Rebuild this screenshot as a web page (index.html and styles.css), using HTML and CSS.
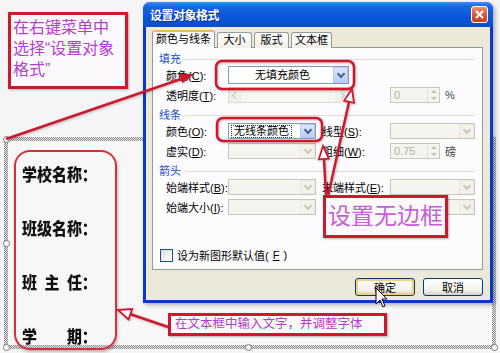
FILE: index.html
```html
<!DOCTYPE html>
<html lang="zh-CN">
<head>
    <meta charset="UTF-8">
    <meta name="viewport" content="width=device-width, initial-scale=1.0">
    <title>设置对象格式</title>
    <link rel="stylesheet" href="styles.css">
</head>
<body>
    <!-- 文档中的文本框 -->
    <div class="frame">
        <div class="fields">
            <div class="field"><span>学</span><span>校</span><span>名</span><span>称</span><span>：</span></div>
            <div class="field"><span>班</span><span>级</span><span>名</span><span>称</span><span>：</span></div>
            <div class="field"><span>班</span><span>主</span><span>任：</span></div>
            <div class="field"><span>学</span><span>期：</span></div>
        </div>
        <span class="handle h-tl"></span>
        <span class="handle h-ml"></span>
        <span class="handle h-bl"></span>
        <span class="handle h-bm"></span>
        <span class="handle h-br"></span>
    </div>

    <!-- 设置对象格式 对话框 -->
    <div class="dialog">
        <div class="titlebar">
            <span class="title">设置对象格式</span>
            <span class="close">
                <svg width="9" height="9" viewBox="0 0 9 9"><path d="M1 1l7 7M8 1l-7 7" stroke="#fff" stroke-width="2"/></svg>
            </span>
        </div>
        <div class="dlg-body">
            <div class="tabs">
                <span class="tab active">颜色与线条</span>
                <span class="tab">大小</span>
                <span class="tab">版式</span>
                <span class="tab">文本框</span>
            </div>
            <div class="panel">
                <div class="group">填充</div>
                <div class="rows">
                    <span class="lbl">颜色(<u>C</u>):</span>
                    <span class="combo wide"><span class="val">无填充颜色</span><span class="arrow"></span></span>
                    <span class="lbl">透明度(<u>T</u>):</span>
                    <span class="slider"><span class="sb-btn left"></span><span class="sb-btn right"></span></span>
                    <span class="spin-wrap"><span class="spin"><span class="val">0</span><span class="updown"></span></span>%</span>
                </div>

                <div class="group">线条</div>
                <div class="rows">
                    <span class="lbl">颜色(<u>O</u>):</span>
                    <span class="combo"><span class="val"><span class="focus">无线条颜色</span></span><span class="arrow"></span></span>
                    <span class="lbl">线型(<u>S</u>):</span>
                    <span class="combo off right"><span class="val"></span><span class="arrow"></span></span>
                    <span class="lbl">虚实(<u>D</u>):</span>
                    <span class="combo off"><span class="val"></span><span class="arrow"></span></span>
                    <span class="lbl">粗细(<u>W</u>):</span>
                    <span class="spin-wrap"><span class="spin"><span class="val">0.75</span><span class="updown"></span></span>磅</span>
                </div>

                <div class="group">箭头</div>
                <div class="rows">
                    <span class="lbl">始端样式(<u>B</u>):</span>
                    <span class="combo off"><span class="val"></span><span class="arrow"></span></span>
                    <span class="lbl">末端样式(<u>E</u>):</span>
                    <span class="combo off right"><span class="val"></span><span class="arrow"></span></span>
                    <span class="lbl">始端大小(<u>I</u>):</span>
                    <span class="combo off"><span class="val"></span><span class="arrow"></span></span>
                    <span class="lbl"></span>
                    <span class="combo off right"><span class="val"></span><span class="arrow"></span></span>
                </div>

                <div class="check-row"><span class="checkbox"></span>设为新图形默认值(<u>F</u>)</div>
            </div>
            <div class="buttons">
                <button class="btn default">确定</button>
                <button class="btn">取消</button>
            </div>
        </div>
    </div>

    <!-- 标注 -->
    <div class="note note-menu">在右键菜单中<br>选择“设置对象<br>格式”</div>
    <div class="note note-border">设置无边框</div>
    <div class="note note-text">在文本框中输入文字，并调整字体</div>

    <svg class="marks" width="500" height="353" viewBox="0 0 500 353">
        <g fill="none" stroke="#d0182c" stroke-width="2.5">
            <rect x="216" y="61" width="138" height="28" rx="6"/>
            <rect x="217" y="118" width="105" height="23" rx="6"/>
            <line x1="6" y1="139" x2="181" y2="79"/>
            <line x1="328" y1="196" x2="349" y2="102"/>
            <line x1="326" y1="196" x2="324" y2="159"/>
            <line x1="168" y1="327" x2="130" y2="314"/>
        </g>
        <polygon points="194,74 182.4,83.3 179.2,73.9" fill="#d0182c"/>
        <g fill="#fff" stroke="#d0182c" stroke-width="1.8">
            <polygon points="352,89 354,102.8 344.2,100.6"/>
            <polygon points="323,146 328.8,158.7 318.8,159.3"/>
            <polygon points="118,310 132.1,309.1 128.5,319.5"/>
        </g>
    </svg>

    <svg class="cursor" width="13" height="21" viewBox="0 0 13 21">
        <path d="M1 1v16l4-4 3 7 2-1-3-7h5z" fill="#fff" stroke="#000"/>
    </svg>
</body>
</html>
```

FILE: styles.css
```css
* {
    box-sizing: border-box;
}
body {
    margin: 0;
    width: 500px;
    height: 353px;
    padding: 137px 0 0 4px;
    overflow: hidden;
    position: relative;
    background: #f5f5f7;
    font-family: "Liberation Sans", "Noto Sans CJK SC", sans-serif;
}

/* 文本框 */
.frame {
    position: relative;
    width: 492px;
    height: 212px;
    padding: 9px 0 0 6px;
    border: 4px solid transparent;
    background: linear-gradient(#f7f7f8, #f7f7f8) padding-box,
                repeating-conic-gradient(#858585 0 25%, #ececec 0 50%) 0 0 / 2px 2px border-box;
}
.fields {
    width: 103px;
    height: 200px;
    padding: 12px 0 0 6px;
    border: 2px solid #d4303c;
    border-radius: 16px;
    display: flex;
    flex-direction: column;
    gap: 34px;
    box-shadow: 1px 2px 3px rgba(0, 0, 0, 0.25);
}
.field {
    width: 85px;
    display: flex;
    justify-content: space-between;
    font-family: "Noto Sans CJK SC", sans-serif;
    font-weight: 900;
    font-size: 17px;
    line-height: 20px;
    color: #111;
    transform: scaleX(0.88);
    transform-origin: left center;
}
.handle {
    position: absolute;
    width: 7px;
    height: 7px;
    border: 1px solid #777;
    border-radius: 50%;
    background: #fff;
}
.h-tl { left: -5.5px; top: -5.5px; }
.h-ml { left: -5.5px; top: 98.5px; }
.h-bl { left: -5.5px; top: 202.5px; }
.h-bm { left: 236.5px; top: 202.5px; }
.h-br { left: 482.5px; top: 202.5px; }

/* 对话框 */
.dialog {
    position: absolute;
    left: 143px;
    top: 2px;
    width: 350px;
    height: 301px;
    display: flex;
    flex-direction: column;
    background: #ece9d8;
    border: 3px solid #0838c8;
    border-top: 0;
    border-radius: 7px 7px 0 0;
    box-shadow: 2px 2px 4px rgba(0, 0, 0, 0.3);
    font-size: 11px;
    color: #000;
}
.titlebar {
    height: 25px;
    margin: 0 -3px;
    padding: 0 5px 0 7px;
    display: flex;
    align-items: center;
    justify-content: space-between;
    border-radius: 7px 7px 0 0;
    background: linear-gradient(#3d8ff6, #1864e2 18%, #0a56da 60%, #0a4ecb);
}
.title {
    color: #fff;
    font-weight: bold;
    font-size: 12px;
    letter-spacing: -0.5px;
    text-shadow: 1px 1px 0 #0a2f8a;
}
.close {
    width: 17px;
    height: 17px;
    display: flex;
    align-items: center;
    justify-content: center;
    border: 1px solid #fff;
    border-radius: 3px;
    background: linear-gradient(#ec8f73, #d8502f 60%, #c8401f);
}
.dlg-body {
    flex: 1;
    display: flex;
    flex-direction: column;
    padding: 4px 7px 4px 6px;
}
.tabs {
    height: 17px;
    display: flex;
    align-items: flex-end;
    gap: 2px;
}
.tab {
    position: relative;
    min-width: 35px;
    height: 16px;
    padding: 0 3px;
    text-align: center;
    line-height: 15px;
    border: 1px solid #919b9c;
    border-bottom: 0;
    border-radius: 3px 3px 0 0;
    background: linear-gradient(#fefefe, #f1efe6);
}
.tab.active {
    z-index: 1;
    height: 18px;
    background: #fcfcfe;
    border-top: 2px solid #f4b850;
}
.panel {
    height: 223px;
    margin-top: -1px;
    padding: 5px 7px 7px 6px;
    display: flex;
    flex-direction: column;
    border: 1px solid #919b9c;
    background: #fcfcfe;
}
.group {
    height: 12px;
    margin-top: 4px;
    display: flex;
    align-items: center;
    gap: 4px;
    line-height: 12px;
    color: #1c4fc6;
}
.group:first-child {
    margin-top: 0;
}
.group::after {
    content: "";
    flex: 1;
    border-top: 1px solid #dedbd0;
}
.rows {
    margin-left: 7px;
    display: grid;
    grid-template-columns: 62px 94px 68px 85px;
    grid-auto-rows: 20px;
    align-items: center;
}
.lbl {
    white-space: nowrap;
}
.combo {
    width: 88px;
    height: 16px;
    display: flex;
    border: 1px solid #7f9db9;
    background: #fff;
}
.combo.right {
    width: 85px;
}
.combo.wide {
    grid-column: 2 / 5;
    width: 121px;
    height: 18px;
}
.combo .val {
    flex: 1;
    padding-left: 3px;
    line-height: 14px;
    white-space: nowrap;
}
.combo.wide .val {
    text-align: center;
    line-height: 16px;
}
.focus {
    display: inline-block;
    padding: 0 2px;
    line-height: 11px;
    outline: 1px dotted #333;
    outline-offset: 0;
}
.arrow {
    width: 15px;
    display: flex;
    align-items: center;
    justify-content: center;
    border: 1px solid #b9c9ef;
    background: linear-gradient(#dce6fd, #b9cdfb);
}
.arrow::after,
.sb-btn::after {
    content: "";
    width: 4px;
    height: 4px;
    margin-top: -2px;
    border-right: 2px solid #4d6185;
    border-bottom: 2px solid #4d6185;
    transform: rotate(45deg);
}
.combo.off {
    border-color: #c9c7ba;
    background: #f5f4ee;
}
.combo.off .arrow {
    border-color: #eceadf;
    background: #f3f2ea;
}
.combo.off .arrow::after {
    border-color: #cbc8bb;
}
.slider {
    grid-column: 2 / 4;
    width: 121px;
    height: 16px;
    display: flex;
    justify-content: space-between;
    border: 1px solid #dfddd2;
    background: #f6f5ef;
}
.sb-btn {
    width: 13px;
    display: flex;
    align-items: center;
    justify-content: center;
    background: #f1f0e8;
}
.sb-btn::after {
    margin-top: 0;
    border-width: 1px;
    border-color: #c6c3b6;
}
.sb-btn.left::after {
    transform: rotate(135deg);
}
.sb-btn.right::after {
    transform: rotate(-45deg);
}
.spin-wrap {
    display: flex;
    align-items: center;
    gap: 5px;
    color: #444;
}
.spin {
    width: 50px;
    height: 16px;
    display: flex;
    border: 1px solid #c9c7ba;
    background: #f5f4ee;
}
.spin .val {
    flex: 1;
    padding-left: 3px;
    line-height: 14px;
    color: #b4b1a4;
}
.updown {
    width: 12px;
    display: flex;
    flex-direction: column;
    align-items: center;
    justify-content: space-around;
    border-left: 1px solid #e4e2d8;
}
.updown::before,
.updown::after {
    content: "";
    border-left: 3px solid transparent;
    border-right: 3px solid transparent;
}
.updown::before {
    border-bottom: 3px solid #c2c0b4;
}
.updown::after {
    border-top: 3px solid #c2c0b4;
}
.check-row {
    margin-top: auto;
    margin-left: 1px;
    height: 14px;
    display: flex;
    align-items: center;
    gap: 4px;
}
.checkbox {
    width: 13px;
    height: 13px;
    border: 1px solid #1c5180;
    background: linear-gradient(135deg, #dcdcd6, #fff);
}
.buttons {
    margin-top: 8px;
    display: flex;
    justify-content: flex-end;
    gap: 8px;
}
.btn {
    width: 60px;
    height: 18px;
    padding: 0;
    font: inherit;
    border: 1px solid #003c74;
    border-radius: 3px;
    background: linear-gradient(#fff, #f2f1ec 70%, #d6d0c5);
}
.btn.default {
    box-shadow: inset 0 0 0 2px #f6cf7e;
}

/* 标注 */
.note {
    position: absolute;
    border: 3px solid #d0182c;
    background: #fbf9fc;
    box-shadow: 1px 1px 2px rgba(0, 0, 0, 0.3);
}
.note-menu {
    left: 8px;
    top: 12px;
    width: 120px;
    height: 77px;
    padding: 2px 0 0 2px;
    font-size: 16px;
    line-height: 21px;
    color: #b53fc9;
}
.note-border {
    left: 323px;
    top: 195px;
    width: 125px;
    height: 43px;
    font-size: 23px;
    line-height: 37px;
    text-align: center;
    color: #c65fd6;
}
.note-text {
    left: 168px;
    top: 313px;
    width: 219px;
    height: 23px;
    padding-left: 4px;
    font-size: 12.5px;
    line-height: 17px;
    color: #b33cc8;
}
.marks {
    position: absolute;
    left: 0;
    top: 0;
    pointer-events: none;
    filter: drop-shadow(1px 1px 1px rgba(0, 0, 0, 0.25));
}
.cursor {
    position: absolute;
    left: 375px;
    top: 287px;
}
```
